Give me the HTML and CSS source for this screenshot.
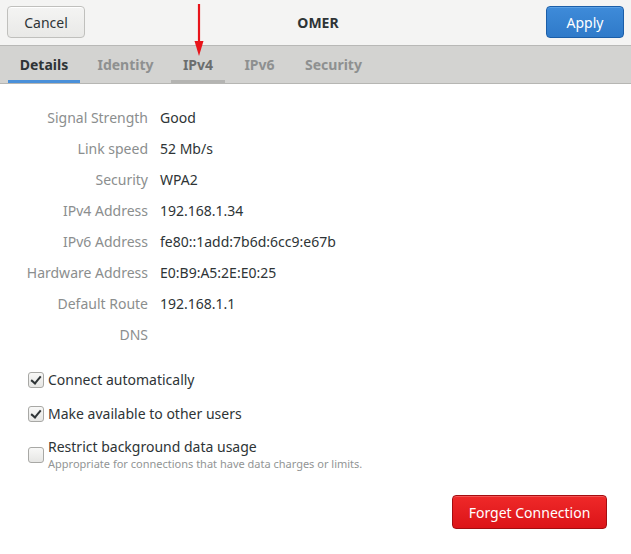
FILE: index.html
```html
<!DOCTYPE html>
<html lang="en">
<head>
    <meta charset="UTF-8">
    <meta name="viewport" content="width=device-width, initial-scale=1.0">
    <title>OMER - Connection Details</title>
    <link rel="stylesheet" href="styles.css">
</head>
<body>

<div class="dialog">
    <div class="headerbar">
        <button class="btn btn-cancel">Cancel</button>
        <div class="title">OMER</div>
        <button class="btn btn-blue">Apply</button>
    </div>

    <div class="tabs">
        <div class="tab tab-details active">Details</div>
        <div class="tab tab-identity">Identity</div>
        <div class="tab tab-ipv4 hover">IPv4</div>
        <div class="tab tab-ipv6">IPv6</div>
        <div class="tab tab-security">Security</div>
    </div>

    <svg class="arrow" width="14" height="60" viewBox="0 0 14 60">
        <line x1="7" y1="4" x2="7" y2="44" stroke="#e8141a" stroke-width="2.2"/>
        <polygon points="2.5,41 11.5,41 7,56" fill="#e8141a"/>
    </svg>

    <div class="content">
        <div class="details">
            <div class="label">Signal Strength</div><div class="value">Good</div>
            <div class="label">Link speed</div><div class="value">52 Mb/s</div>
            <div class="label">Security</div><div class="value">WPA2</div>
            <div class="label">IPv4 Address</div><div class="value">192.168.1.34</div>
            <div class="label">IPv6 Address</div><div class="value">fe80::1add:7b6d:6cc9:e67b</div>
            <div class="label">Hardware Address</div><div class="value">E0:B9:A5:2E:E0:25</div>
            <div class="label">Default Route</div><div class="value">192.168.1.1</div>
            <div class="label">DNS</div><div class="value"></div>
        </div>

        <div class="checks">
            <label class="check">
                <span class="box checked"></span>
                <span>Connect automatically</span>
            </label>
            <label class="check">
                <span class="box checked"></span>
                <span>Make available to other users</span>
            </label>
            <label class="check top">
                <span class="box"></span>
                <span class="check-text">
                    <span>Restrict background data usage</span>
                    <span class="hint">Appropriate for connections that have data charges or limits.</span>
                </span>
            </label>
        </div>

        <div class="actions">
            <button class="btn btn-red">Forget Connection</button>
        </div>
    </div>
</div>

</body>
</html>
```

FILE: styles.css
```css
body {
    margin: 0;
    font-family: "Noto Sans", "Open Sans", sans-serif;
    font-size: 14px;
    color: #2e3436;
    background-color: #ffffff;
}
.dialog {
    position: relative;
    width: 631px;
    height: 554px;
    background-color: #ffffff;
}
.headerbar {
    display: flex;
    align-items: center;
    justify-content: space-between;
    height: 46px;
    padding: 0 7px 1px 7px;
    background-color: #f4f4f3;
    border-bottom: 1px solid #b8b8b6;
    box-sizing: border-box;
}
.title {
    font-weight: bold;
    font-size: 14px;
    color: #2e3436;
    margin-left: 5px;
}
.btn {
    font-family: inherit;
    font-size: 14px;
    height: 32px;
    padding: 0 10px;
    white-space: nowrap;
    color: #2e3436;
    background: linear-gradient(#f4f4f3, #e9e9e7);
    border: 1px solid #c0c0bd;
    border-radius: 4px;
    box-shadow: inset 0 1px #ffffff;
}
.btn-cancel {
    width: 78px;
}
.btn-blue {
    width: 78px;
    color: #ffffff;
    background: linear-gradient(#3e8bd9, #2f7ac9);
    border-color: #1b5ea8;
    box-shadow: inset 0 1px #5aa0e4;
}
.tabs {
    display: flex;
    gap: 8px;
    height: 38px;
    padding-left: 8px;
    background-color: #d3d3d1;
    border-bottom: 1px solid #b6b6b3;
    box-sizing: border-box;
}
.tab {
    height: 37px;
    line-height: 38px;
    text-align: center;
    font-weight: bold;
    color: #8e9090;
    border-bottom: 3px solid transparent;
    box-sizing: border-box;
    white-space: nowrap;
}
.tab-details { width: 72px; }
.tab-identity { width: 75px; }
.tab-ipv4 { width: 54px; }
.tab-ipv6 { width: 53px; }
.tab-security { width: 79px; }
.tab.active {
    color: #2e3436;
    border-bottom-color: #4a90d9;
}
.tab.hover {
    color: #6b6e6e;
    border-bottom-color: #b4b4b2;
}
.arrow {
    position: absolute;
    left: 192px;
    top: 0;
}
.content {
    padding: 24px 24px 0 24px;
}
.details {
    display: grid;
    grid-template-columns: 124px 1fr;
    column-gap: 12px;
    row-gap: 11px;
    line-height: 20px;
}
.label {
    text-align: right;
    color: #8b8e8e;
}
.value {
    color: #2e3436;
}
.checks {
    display: flex;
    flex-direction: column;
    gap: 14px;
    margin-top: 25px;
    padding-left: 4px;
}
.check {
    display: flex;
    align-items: center;
    gap: 4px;
    line-height: 20px;
}
.check.top {
    align-items: flex-start;
    margin-top: -1px;
}
.check.top .box {
    margin-top: 10px;
}
.check-text {
    display: flex;
    flex-direction: column;
}
.hint {
    font-size: 11px;
    line-height: 14px;
    color: #929595;
}
.box {
    width: 14px;
    height: 14px;
    border: 1px solid #a8a8a5;
    border-radius: 3px;
    background: linear-gradient(#f8f8f7, #e6e6e4);
    position: relative;
    flex-shrink: 0;
}
.box.checked::after {
    content: "";
    position: absolute;
    left: 4px;
    top: 1px;
    width: 4px;
    height: 8px;
    border: solid #2e3436;
    border-width: 0 2.5px 2.5px 0;
    transform: rotate(40deg);
}
.actions {
    display: flex;
    justify-content: flex-end;
    margin-top: 24px;
}
.btn-red {
    height: 34px;
    width: 155px;
    color: #ffffff;
    background: linear-gradient(#ef2929, #dc1418);
    border-color: #a40d10;
    box-shadow: inset 0 1px #f45555;
}
```
